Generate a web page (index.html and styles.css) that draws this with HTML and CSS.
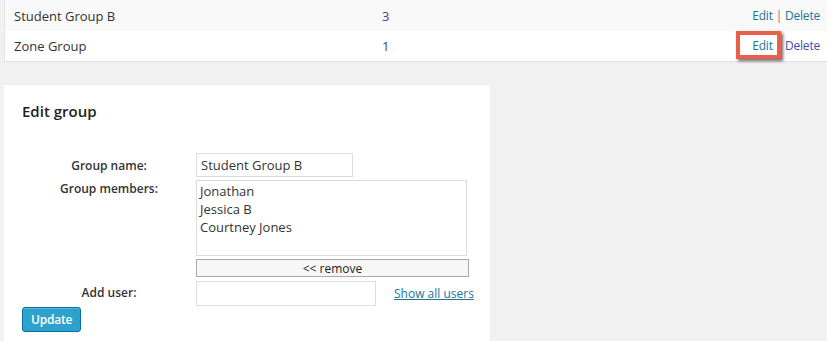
FILE: index.html
```html
<!DOCTYPE html>
<html lang="en">
<head>
  <meta charset="UTF-8" />
  <title>Groups</title>
  <link rel="stylesheet" href="styles.css">
</head>
<body>
  <div class="group-list">
    <div class="row alt">
      <span class="name">Student Group B</span>
      <a class="count" href="#">3</a>
      <span class="actions"><a href="#">Edit</a> <span class="sep">|</span> <a href="#">Delete</a></span>
    </div>
    <div class="row">
      <span class="name">Zone Group</span>
      <a class="count" href="#">1</a>
      <span class="actions"><a class="marked" href="#">Edit</a> <span class="sep">|</span> <a class="seen" href="#">Delete</a></span>
    </div>
  </div>

  <div class="panel">
    <h3>Edit group</h3>
    <div class="form-grid">
      <label class="lbl mid">Group name:</label>
      <div class="field"><input type="text" class="name-input" value="Student Group B"></div>

      <label class="lbl top">Group members:</label>
      <div class="field">
        <div class="members">
          <div>Jonathan</div>
          <div>Jessica B</div>
          <div>Courtney Jones</div>
        </div>
        <button class="remove">&lt;&lt; remove</button>
      </div>

      <label class="lbl mid">Add user:</label>
      <div class="field add-row">
        <input type="text" class="user-input">
        <a href="#" class="show-all">Show all users</a>
      </div>
    </div>
    <button class="update">Update</button>
  </div>
</body>
</html>
```

FILE: styles.css
```css
body { margin: 0; background: #f1f1f1; font-family: "Open Sans", sans-serif; font-size: 13px; color: #333; }
a { color: #21759b; text-decoration: none; }

.group-list { margin-left: 4px; background: #fff; border-left: 1px solid #e5e5e5; box-shadow: 0 1px 1px rgba(0,0,0,.06); }
.row { display: grid; grid-template-columns: 368px 1fr auto; align-items: center; height: 31px; padding: 0 7px 0 9px; }
.row.alt { background: #f9f9f9; }
.row + .row { height: 30px; }
.count { color: #44447a; }
.actions { font-size: 12px; letter-spacing: -.2px; line-height: 16px; }
.actions .sep { color: #a0665a; }
.actions .seen { color: #3a4fa8; }
.marked { position: relative; display: inline-block; }
.marked::before { content: ""; position: absolute; left: -16px; top: -7px; width: 37px; height: 20px; border: 4px solid #e8604c; box-shadow: 2px 2px 3px rgba(0,0,0,.6); }

.panel { margin: 24px 0 0 4px; width: 468px; padding: 1px 0 10px 18px; background: #fff; min-height: 240px; }
.panel h3 { font-size: 15px; font-weight: 600; color: #222; margin: 15px 0 32px 0; }

.form-grid { display: grid; grid-template-columns: 174px 1fr; row-gap: 3px; }
.lbl { font-weight: 600; font-size: 12px; color: #333; text-align: center; }
.lbl.mid { padding-top: 4px; }
.lbl.top { padding-top: 0; }
.field input, .members { box-sizing: border-box; border: 1px solid #ddd; font-family: inherit; font-size: 13px; color: #333; margin: 0; }
.name-input { width: 157px; height: 24px; padding: 0 4px; }
.members { width: 271px; height: 76px; padding: 1px 3px; line-height: 18px; }
.remove { display: block; width: 273px; height: 18px; margin-top: 3px; padding: 0; background: #f7f7f7; border: 1px solid #aaa; font-family: inherit; font-size: 12px; color: #222; line-height: 15px; }
.add-row { display: flex; align-items: center; margin-top: 1px; }
.user-input { width: 180px; height: 25px; }
.show-all { margin-left: 18px; text-decoration: underline; font-size: 12px; }

.update { margin-top: 1px; height: 25px; padding: 0 8px; background: #2ea2cc; border: 1px solid #0074a2; border-radius: 3px; box-shadow: inset 0 1px 0 rgba(120,200,230,.5); color: #fff; font-family: inherit; font-size: 12px; font-weight: 600; letter-spacing: -.2px; }
```
